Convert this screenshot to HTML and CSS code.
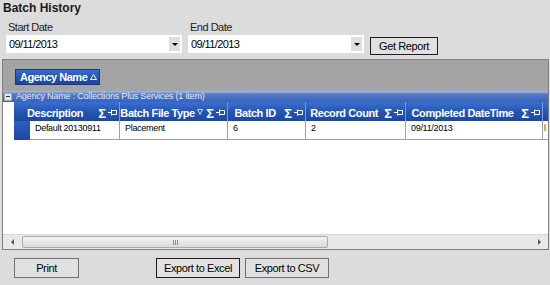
FILE: index.html
```html
<!DOCTYPE html>
<html lang="en">
<head>
  <meta charset="UTF-8">
  <meta name="viewport" content="width=device-width, initial-scale=1.0">
  <title>Batch History</title>
  <link rel="stylesheet" href="styles.css">
</head>
<body>
  <h1 class="title">Batch History</h1>

  <div class="filters">
    <div class="field">
      <label for="startDate">Start Date</label>
      <div class="combo" id="startDate">
        <span>09/11/2013</span>
        <span class="drop"></span>
      </div>
    </div>
    <div class="field">
      <label for="endDate">End Date</label>
      <div class="combo" id="endDate">
        <span>09/11/2013</span>
        <span class="drop"></span>
      </div>
    </div>
    <button class="btn focus report">Get Report</button>
  </div>

  <div class="grid">
    <div class="group-panel">
      <span class="chip">Agency Name
        <svg width="7" height="6" viewBox="0 0 7 6"><path d="M3.5 0.5L6.5 5.5H0.5Z" fill="none" stroke="#fff"/></svg>
      </span>
    </div>

    <div class="group-row">
      <span class="collapse"></span>
      Agency Name : Collections Plus Services (1 item)
    </div>

    <div class="header">
      <div class="hcell w-desc">
        <span class="label">Description</span>
        <span class="sigma">&Sigma;</span>
        <svg class="pin" width="9" height="7" viewBox="0 0 9 7"><path d="M0 3.5H3M3.5 0.5V6.5M3.5 1.5H8.5V5.5H3.5" fill="none" stroke="#fff"/></svg>
      </div>
      <div class="hcell w-type">
        <span class="label">Batch File Type</span>
        <svg class="filter" width="6" height="6" viewBox="0 0 6 6"><path d="M0.5 0.5H5.5L3 5.5Z" fill="none" stroke="#c8d6f2"/></svg>
        <span class="sigma">&Sigma;</span>
        <svg class="pin" width="9" height="7" viewBox="0 0 9 7"><path d="M0 3.5H3M3.5 0.5V6.5M3.5 1.5H8.5V5.5H3.5" fill="none" stroke="#fff"/></svg>
      </div>
      <div class="hcell w-id">
        <span class="label">Batch ID</span>
        <span class="sigma">&Sigma;</span>
        <svg class="pin" width="9" height="7" viewBox="0 0 9 7"><path d="M0 3.5H3M3.5 0.5V6.5M3.5 1.5H8.5V5.5H3.5" fill="none" stroke="#fff"/></svg>
      </div>
      <div class="hcell w-count">
        <span class="label">Record Count</span>
        <span class="sigma">&Sigma;</span>
        <svg class="pin" width="9" height="7" viewBox="0 0 9 7"><path d="M0 3.5H3M3.5 0.5V6.5M3.5 1.5H8.5V5.5H3.5" fill="none" stroke="#fff"/></svg>
      </div>
      <div class="hcell w-done">
        <span class="label">Completed DateTime</span>
        <span class="sigma">&Sigma;</span>
        <svg class="pin" width="9" height="7" viewBox="0 0 9 7"><path d="M0 3.5H3M3.5 0.5V6.5M3.5 1.5H8.5V5.5H3.5" fill="none" stroke="#fff"/></svg>
      </div>
      <div class="hcell w-rest"></div>
    </div>

    <div class="row">
      <div class="selector"></div>
      <div class="cell w-desc-data">Default 20130911</div>
      <div class="cell w-type">Placement</div>
      <div class="cell w-id">6</div>
      <div class="cell w-count">2</div>
      <div class="cell w-done">09/11/2013</div>
      <div class="cell w-rest"><span class="mark"></span></div>
    </div>

    <div class="grid-body"></div>

    <div class="hscroll">
      <span class="arrow"><span class="tri-left"></span></span>
      <span class="thumb"><span class="grip"></span></span>
      <span class="track"></span>
      <span class="arrow"><span class="tri-right"></span></span>
    </div>
  </div>

  <div class="actions">
    <button class="btn print">Print</button>
    <button class="btn focus export">Export to Excel</button>
    <button class="btn export">Export to CSV</button>
  </div>
</body>
</html>
```

FILE: styles.css
```css
body {
  margin: 0;
  width: 550px;
  height: 285px;
  overflow: hidden;
  background-color: #dcdcdc;
  font-family: "Liberation Sans", Arial, sans-serif;
  color: #000;
}
.title {
  margin: 0;
  padding: 1px 0 0 3px;
  font-size: 12px;
  line-height: 14px;
  font-weight: bold;
  color: #1a1a1a;
}

/* date filters */
.filters {
  display: flex;
  gap: 6px;
  margin-top: 6px;
  padding-left: 6px;
}
.field label {
  display: block;
  padding-left: 2px;
  font-size: 11px;
  line-height: 13px;
  letter-spacing: -0.5px;
  color: #222;
}
.combo {
  display: flex;
  align-items: center;
  justify-content: space-between;
  width: 176px;
  height: 18px;
  margin-top: 1px;
  padding: 0 2px 0 3px;
  box-sizing: border-box;
  background: #fff;
  font-size: 11px;
  letter-spacing: -0.6px;
}
.drop {
  display: flex;
  align-items: center;
  justify-content: center;
  width: 11px;
  height: 14px;
  background: #dedede;
}
.drop::after {
  content: "";
  border-left: 3px solid transparent;
  border-right: 3px solid transparent;
  border-top: 3px solid #000;
}
.btn {
  padding: 0;
  background: #e1e1e1;
  border: 1px solid #707070;
  font-family: inherit;
  font-size: 11px;
  letter-spacing: -0.4px;
  color: #000;
}
.btn.focus {
  border-color: #1e1e1e;
}
.report {
  align-self: flex-end;
  width: 68px;
  height: 18px;
  margin-bottom: -2px;
}

/* grid */
.grid {
  width: 547px;
  margin: 6px 0 0 2px;
  border: 1px solid #7f7f7f;
  box-sizing: border-box;
  background: #fff;
}
.group-panel {
  height: 31px;
  padding: 7px 0 0 12px;
  box-sizing: border-box;
  background: #a4a4a4;
}
.chip {
  display: inline-flex;
  align-items: center;
  gap: 3px;
  width: 85px;
  height: 16px;
  padding-left: 4px;
  box-sizing: border-box;
  background: linear-gradient(#3a6ccb, #2152b0 60%, #1b469c);
  border: 1px solid #173a82;
  color: #fff;
  font-size: 11px;
  font-weight: bold;
  letter-spacing: -0.5px;
  white-space: nowrap;
}
.group-row {
  display: flex;
  align-items: center;
  gap: 4px;
  height: 11px;
  padding-left: 1px;
  background: linear-gradient(#aebde2, #5479c8 30%, #3a62b8);
  color: #e2e9f7;
  font-size: 9px;
  line-height: 11px;
  letter-spacing: -0.2px;
  white-space: nowrap;
}
.collapse {
  position: relative;
  width: 8px;
  height: 8px;
  box-sizing: border-box;
  background: #e6e8ee;
  border: 1px solid #9aa8c8;
}
.collapse::after {
  content: "";
  position: absolute;
  left: 1px;
  top: 2px;
  width: 4px;
  height: 1px;
  background: #333;
}
.header {
  display: flex;
  height: 19px;
  margin-left: 11px;
  background: linear-gradient(#3a6fd0, #2456b6 50%, #1d47a0);
}
.hcell {
  display: flex;
  align-items: center;
  gap: 2px;
  padding: 3px 2px 0 0;
  box-sizing: border-box;
  border-right: 1px solid #7d9ad6;
  color: #fff;
  font-size: 11px;
  font-weight: bold;
  letter-spacing: -0.4px;
  white-space: nowrap;
}
.hcell .label {
  flex: 1;
  text-align: center;
}
.sigma {
  font-size: 13px;
  line-height: 13px;
  letter-spacing: 0;
}
.pin {
  margin-top: -2px;
}
.filter {
  margin: -2px 1px 0 0;
}
.w-desc { width: 106px; }
.w-desc-data { width: 90px; }
.w-type { width: 108px; }
.w-id { width: 78px; }
.w-count { width: 100px; }
.w-done { width: 137px; }
.w-rest { flex: 1; }
.hcell.w-rest { border-right: none; }

.row {
  display: flex;
  height: 19px;
  margin-left: 11px;
}
.selector {
  width: 16px;
  background: linear-gradient(#2d60c2, #1c47a2);
}
.cell {
  padding: 2px 0 0 5px;
  box-sizing: border-box;
  border-right: 1px solid #a0a0a0;
  border-bottom: 1px solid #a0a0a0;
  font-size: 9px;
  line-height: 11px;
  letter-spacing: -0.3px;
  white-space: nowrap;
}
.cell.w-rest {
  padding: 3px 0 0 1px;
  border-right: none;
}
.mark {
  display: block;
  width: 2px;
  height: 7px;
  background: #e9a24a;
}
.grid-body {
  height: 94px;
}

/* horizontal scroll bar */
.hscroll {
  display: flex;
  height: 15px;
  padding: 1px 0;
  box-sizing: border-box;
  background: #e8e8e8;
  border-top: 1px solid #d6d6d6;
}
.arrow {
  display: flex;
  align-items: center;
  justify-content: center;
  width: 18px;
}
.tri-left {
  border-top: 3px solid transparent;
  border-bottom: 3px solid transparent;
  border-right: 3px solid #555;
}
.tri-right {
  border-top: 3px solid transparent;
  border-bottom: 3px solid transparent;
  border-left: 3px solid #555;
}
.thumb {
  display: flex;
  align-items: center;
  justify-content: center;
  width: 306px;
  margin-left: 1px;
  box-sizing: border-box;
  border: 1px solid #a9a9a9;
  border-radius: 2px;
  background: linear-gradient(#f3f3f3, #dadada);
}
.grip {
  width: 5px;
  height: 5px;
  background: repeating-linear-gradient(to right, #8a8a8a 0 1px, transparent 1px 2px);
}
.track {
  flex: 1;
}

/* bottom buttons */
.actions {
  display: flex;
  gap: 5px;
  margin-top: 8px;
  padding-left: 14px;
}
.actions .btn {
  height: 20px;
}
.print {
  width: 65px;
  margin-right: 72px;
}
.export {
  width: 84px;
}
```
